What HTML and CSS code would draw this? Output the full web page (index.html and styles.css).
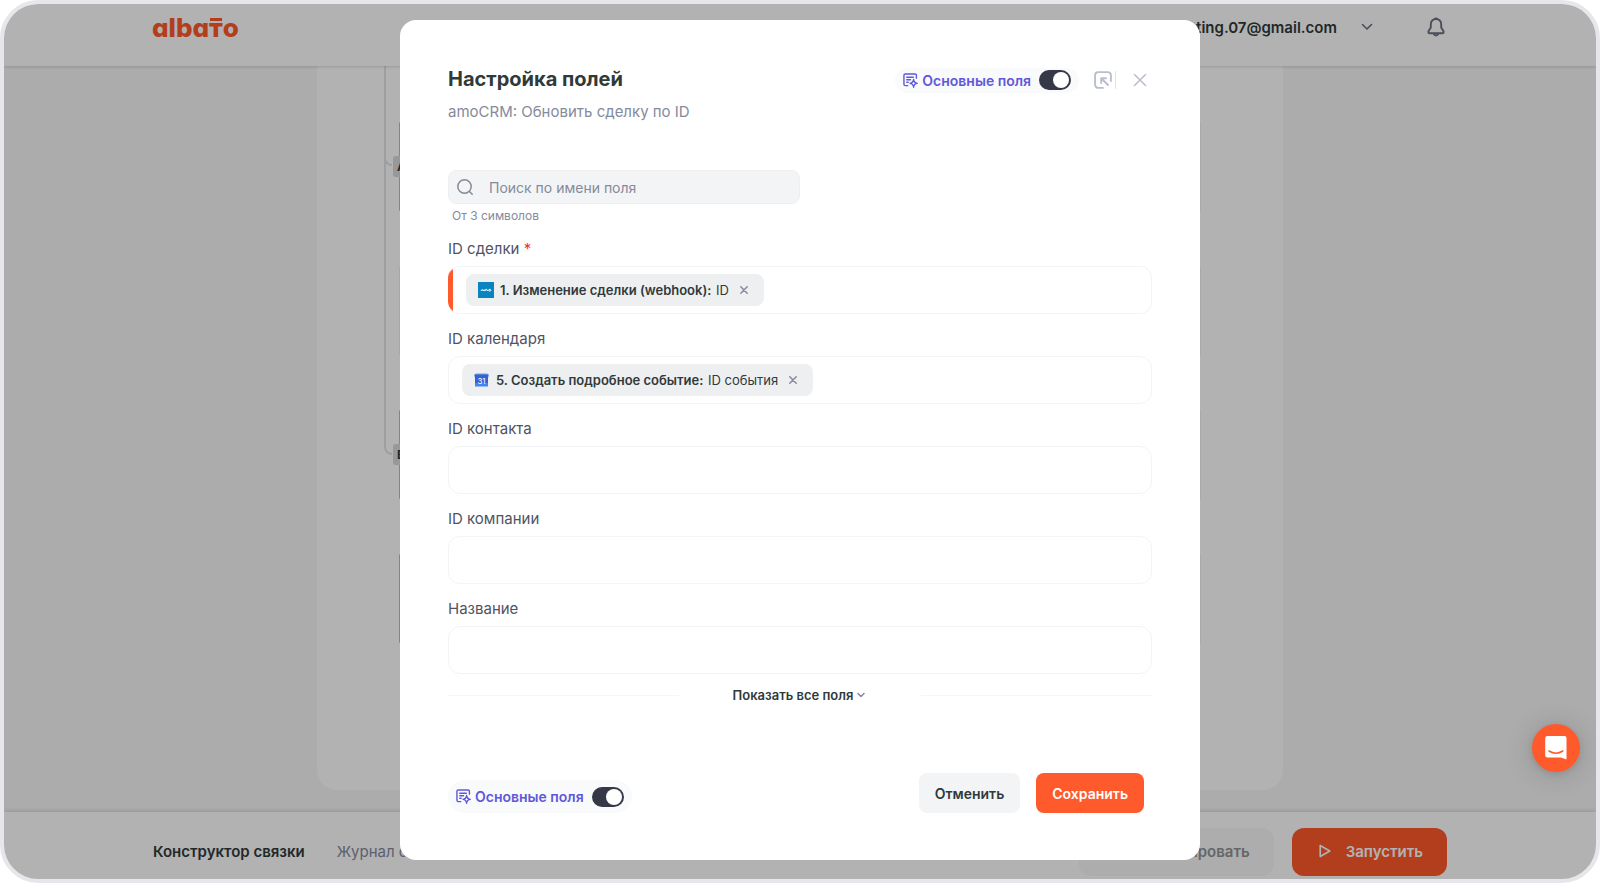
FILE: index.html
```html
<!DOCTYPE html>
<html lang="ru">
<head>
<meta charset="utf-8">
<meta name="viewport" content="width=device-width, initial-scale=1">
<title>Albato — Настройка полей</title>
<link rel="stylesheet" href="styles.css">
</head>
<body>
<svg class="sprite" aria-hidden="true">
  <symbol id="i-fields" viewBox="0 0 16 16">
    <path d="M14.300 5.500V2.500A1.500 1.500 0 0 0 12.800 1H2.500A1.500 1.500 0 0 0 1 2.500V12A1.500 1.500 0 0 0 2.500 13.500H5M4 4.500H11M4 7.200H8M4 9.900H5.500" fill="none" stroke="currentColor" stroke-width="1.500" stroke-linecap="round"/>
    <path d="M11.300 6.800C11.600 9.800 12.500 10.700 15.200 11C12.500 11.300 11.600 12.200 11.300 15.200C11 12.200 10.100 11.300 7.400 11C10.100 10.700 11 9.800 11.300 6.800Z" fill="none" stroke="currentColor" stroke-width="1.400" stroke-linejoin="round"/>
  </symbol>
  <symbol id="i-chevron" viewBox="0 0 12 12"><path d="M1.500 3.500L6 8L10.500 3.500" fill="none" stroke="currentColor" stroke-width="1.600" stroke-linecap="round" stroke-linejoin="round"/></symbol>
  <symbol id="i-chevron-small" viewBox="0 0 8 8"><path d="M1 2.500L4 5.500L7 2.500" fill="none" stroke="currentColor" stroke-width="1.500" stroke-linecap="round" stroke-linejoin="round"/></symbol>
  <symbol id="i-cross" viewBox="0 0 14 14"><path d="M1.500 1.500L12.500 12.500M12.500 1.500L1.500 12.500" fill="none" stroke="currentColor" stroke-width="1.500" stroke-linecap="round"/></symbol>
  <symbol id="i-cross-small" viewBox="0 0 8 8"><path d="M.8 .8L7.200 7.200M7.200 .8L.8 7.200" fill="none" stroke="currentColor" stroke-width="1.500" stroke-linecap="round"/></symbol>
</svg>
<div class="frame">
  <div class="page">
    <header class="topbar">
      <div class="container topbar-row">
        <a class="logo" href="#" aria-label="albato">alba<span class="logo-t">т</span>o</a>
        <div class="account">
          <button class="account-menu" type="button">marketing.07@gmail.com
            <svg class="account-chevron"><use href="#i-chevron"/></svg>
          </button>
          <button class="bell" type="button" aria-label="Уведомления">
            <svg viewBox="0 0 18 20" width="18" height="20" fill="none" stroke="currentColor" stroke-width="1.900" stroke-linecap="round" stroke-linejoin="round"><path d="M7.300 2.300Q9 .5 10.700 2.300M9 2C5.800 2 3.800 4.200 3.800 7.200V10.500L1.500 14.300Q1 16.200 2.600 16.200H15.400Q17 16.200 16.500 14.300L14.200 10.500V7.200C14.200 4.200 12.200 2 9 2ZM7 17.500Q9 19.800 11 17.500"/></svg>
          </button>
        </div>
      </div>
    </header>
    <main class="workspace">
      <div class="canvas">
        <span class="wire wire-upper"></span>
        <span class="wire wire-lower"></span>
        <span class="node node-a"></span>
        <span class="node node-b"></span>
        <span class="node node-c"></span>
        <span class="node node-d"></span>
        <span class="branch branch-a">А</span>
        <span class="branch branch-b">Б</span>
      </div>
    </main>
    <footer class="bottombar">
      <div class="container bottombar-row">
        <nav class="tabs">
          <a class="tab tab-active" href="#">Конструктор связки</a>
          <a class="tab" href="#">Журнал связки</a>
        </nav>
        <div class="run-actions">
          <button class="btn-test" type="button" disabled>Протестировать</button>
          <button class="btn-run" type="button">
            <svg viewBox="0 0 14 14" width="14" height="14"><path d="M2.200 1.500V12.500L11.800 7Z" fill="none" stroke="currentColor" stroke-width="1.600" stroke-linejoin="round"/></svg>
            Запустить
          </button>
        </div>
      </div>
    </footer>
  </div>

  <div class="overlay">
    <form class="dialog" role="dialog" aria-labelledby="dialog-title">
      <div class="dialog-head">
        <h1 class="dialog-title" id="dialog-title">Настройка полей</h1>
        <div class="head-tools">
          <label class="mode mode-compact">
            <svg class="mode-icon"><use href="#i-fields"/></svg>
            Основные поля
            <input class="switch" type="checkbox" checked>
          </label>
          <button class="tool tool-expand" type="button" aria-label="Развернуть">
            <svg viewBox="0 0 18 18" width="18" height="18" fill="none" stroke="currentColor" stroke-width="1.900" stroke-linecap="round" stroke-linejoin="round"><path d="M16.900 10V4.200A3.100 3.100 0 0 0 13.800 1.100H4.200A3.100 3.100 0 0 0 1.100 4.200V13.800A3.100 3.100 0 0 0 4.200 16.900H9M7.200 12V7.200H12M7.500 7.500L14 14"/></svg>
          </button>
          <button class="tool tool-close" type="button" aria-label="Закрыть">
            <svg width="14" height="14"><use href="#i-cross"/></svg>
          </button>
        </div>
      </div>
      <p class="dialog-subtitle">amoCRM: Обновить сделку по ID</p>

      <div class="search">
        <svg viewBox="0 0 16 16" width="16" height="16" fill="none" stroke="currentColor" stroke-width="1.500" stroke-linecap="round"><circle cx="7.500" cy="7.500" r="6.700"/><path d="M12.500 12.500L15.200 15.200"/></svg>
        <input class="search-input" type="search" placeholder="Поиск по имени поля" aria-label="Поиск по имени поля" aria-describedby="search-hint">
      </div>
      <p class="hint" id="search-hint">От 3 символов</p>

      <div class="fields">
        <div class="field">
          <label class="field-label" for="deal">ID сделки <span class="required">*</span></label>
          <div class="box box-required">
            <span class="chip">
              <svg class="chip-icon" viewBox="0 0 16 16"><rect width="16" height="16" fill="#0a84c1"/><path d="M3.200 8.900C3.200 7.200 5.200 7.200 5.200 8.900M5.400 9V7.800M6.400 9V8Q7.200 6.800 7.900 8V9M7.900 8Q8.800 6.800 9.500 8V9M11 7.400H12.300Q13.500 8.200 12.300 9H11Q10 8.200 11 7.400" fill="none" stroke="#fff" stroke-width="1"/></svg>
              <span class="chip-text"><b>1. Изменение сделки (webhook):</b> ID</span>
              <button class="chip-remove" type="button" aria-label="Удалить"><svg width="8" height="8"><use href="#i-cross-small"/></svg></button>
            </span>
            <input class="box-input" id="deal" type="text">
          </div>
        </div>
        <div class="field">
          <label class="field-label" for="calendar">ID календаря</label>
          <div class="box">
            <span class="chip">
              <svg class="chip-icon" viewBox="0 0 16 16"><path d="M1.500 1H13.500V4H1.500Z" fill="#c3c3c6"/><path d="M.5 2.500H14.500L14 6V14.500H1V6Z" fill="#4285f4"/><path d="M.5 2.500H14.500L14 6V11H1V6Z" fill="#3563d6"/><text x="7.500" y="12" text-anchor="middle" class="calendar-day">31</text></svg>
              <span class="chip-text"><b>5. Создать подробное событие:</b> ID события</span>
              <button class="chip-remove" type="button" aria-label="Удалить"><svg width="8" height="8"><use href="#i-cross-small"/></svg></button>
            </span>
            <input class="box-input" id="calendar" type="text">
          </div>
        </div>
        <div class="field">
          <label class="field-label" for="contact">ID контакта</label>
          <div class="box"><input class="box-input" id="contact" type="text"></div>
        </div>
        <div class="field">
          <label class="field-label" for="company">ID компании</label>
          <div class="box"><input class="box-input" id="company" type="text"></div>
        </div>
        <div class="field">
          <label class="field-label" for="name">Название</label>
          <div class="box"><input class="box-input" id="name" type="text"></div>
        </div>
      </div>

      <div class="more">
        <button class="more-button" type="button">Показать все поля <svg width="8" height="8"><use href="#i-chevron-small"/></svg></button>
      </div>

      <div class="dialog-foot">
        <label class="mode">
          <svg class="mode-icon"><use href="#i-fields"/></svg>
          Основные поля
          <input class="switch" type="checkbox" checked>
        </label>
        <div class="dialog-actions">
          <button class="btn btn-cancel" type="button">Отменить</button>
          <button class="btn btn-save" type="submit">Сохранить</button>
        </div>
      </div>
    </form>
    <button class="chat" type="button" aria-label="Чат поддержки">
      <svg viewBox="0 0 24 26" width="24" height="26"><path d="M3.500 1H20.500Q22.500 1 22.500 3V24.500L17 22.500H3.500Q1.200 22.500 1.200 20.200V3.300Q1.200 1 3.500 1Z" fill="#fff"/><path d="M5 16Q11.800 20.500 18.800 16" fill="none" stroke="#ff5a2c" stroke-width="1.500" stroke-linecap="round"/></svg>
    </button>
  </div>
</div>
</body>
</html>
```

FILE: styles.css
```css
* { box-sizing: border-box; }

body {
  margin: 0;
  background: #fff;
  color: #303a3a;
  font-family: Inter, "Noto Sans", sans-serif;
  font-size: 15px;
}

button, input { font: inherit; color: inherit; }
button { padding: 0; border: 0; background: none; cursor: pointer; }
a { color: inherit; text-decoration: none; }
h1, p { margin: 0; }
svg { display: block; flex: none; }
.sprite { position: absolute; width: 0; height: 0; }

.frame {
  display: grid;
  min-height: 100vh;
  border: 4px solid #e5e7eb;
  border-radius: 38px;
  overflow: hidden;
}
.page, .overlay { grid-area: 1 / 1; min-width: 0; }

/* Page under the dialog */
.page {
  display: flex;
  flex-direction: column;
  background: #f6f6f6;
}
.container {
  width: 100%;
  max-width: 1296px;
  margin: 0 auto;
}
.topbar {
  z-index: 1;
  padding-bottom: 16px;
  background: #fff;
  box-shadow: 0 1px 3px #00000024;
}
.topbar-row, .bottombar-row {
  display: flex;
  align-items: center;
  justify-content: space-between;
}
.topbar-row { height: 46px; }
.bottombar-row { height: 48px; }
.logo {
  padding-top: 2px;
  color: #ff5a2c;
  font-size: 26px;
  font-weight: 800;
  line-height: 32px;
  font-feature-settings: "cv11";
}
.logo-t { position: relative; }
.logo-t::before {
  content: "";
  position: absolute;
  top: 6px;
  left: 1px;
  right: 1px;
  height: 3px;
  background: currentColor;
}
.account {
  display: flex;
  align-items: center;
  gap: 54px;
  padding-right: 3px;
}
.account-menu {
  display: flex;
  align-items: center;
  gap: 24px;
  font-weight: 600;
}
.account-chevron { width: 12px; height: 12px; color: #6b7080; }
.bell { color: #6b7080; }

.workspace {
  display: flex;
  flex: 1;
  justify-content: center;
  padding-bottom: 22px;
}
.canvas {
  position: relative;
  width: 966px;
  background: #fff;
  border-radius: 0 0 20px 20px;
}
.wire {
  position: absolute;
  left: 67px;
  width: 8px;
  border-left: 2px solid #e3e4e6;
  border-bottom: 2px solid #e3e4e6;
  border-radius: 0 0 0 8px;
}
.wire-upper { top: 0; height: 100px; }
.wire-lower { top: 0; height: 389px; }
.node {
  position: absolute;
  left: 82px;
  right: 82px;
  border: 1px solid #f2f2f2;
  border-left-color: #7fe0bf;
}
.node-a { top: 56px; height: 89px; }
.node-b { top: 201px; height: 88px; border-left-color: #eee; }
.node-c { top: 344px; height: 89px; }
.node-d { top: 488px; height: 89px; }
.branch {
  position: absolute;
  left: 76px;
  padding: 0 4px;
  border-radius: 3px;
  background: #d9dadd;
  font-size: 12px;
  font-weight: 700;
  line-height: 21px;
}
.branch-a { top: 90px; }
.branch-b { top: 378px; }

.bottombar {
  padding: 16px 0 3px;
  background: #fff;
  box-shadow: 0 -1px 4px #00000024;
}
.tabs {
  display: flex;
  gap: 32px;
  padding: 0 0 2px 1px;
}
.tab { color: #858a9c; }
.tab-active { color: #303a3a; font-weight: 600; }
.run-actions {
  display: flex;
  gap: 18px;
  padding-right: 1px;
}
.btn-test, .btn-run {
  display: flex;
  align-items: center;
  height: 48px;
  border-radius: 12px;
  font-weight: 600;
}
.btn-test {
  justify-content: flex-end;
  width: 195px;
  padding: 0 24px 2px 0;
  background: #f8f8f9;
  color: #8f9494;
}
.btn-run {
  gap: 14px;
  padding: 0 24px 2px 26px;
  background: #ff5a2c;
  color: #fff;
}

/* Dialog */
.overlay {
  position: relative;
  z-index: 2;
  display: flex;
  justify-content: center;
  align-items: flex-start;
  padding: 16px 0 19px;
  background: rgba(0, 0, 0, 0.3);
}
.dialog {
  width: 100%;
  max-width: 800px;
  padding: 44px 48px 47px;
  border-radius: 16px;
  background: #fff;
}
.dialog-head {
  display: flex;
  align-items: center;
  justify-content: space-between;
}
.dialog-title {
  font-size: 20px;
  font-weight: 700;
  line-height: 30px;
}
.dialog-subtitle {
  margin-top: 6px;
  color: #858a9c;
  line-height: 24px;
}
.head-tools {
  display: flex;
  align-items: center;
  padding-top: 2px;
  color: #b9becb;
}
.mode {
  display: flex;
  align-items: center;
  gap: 4px;
  height: 33px;
  padding: 0 8px;
  border-radius: 17px;
  background: #f9fafc;
  color: #5f58db;
  font-size: 14px;
  font-weight: 600;
}
.mode-compact { height: 25px; }
.mode-icon { width: 15px; height: 15px; }
.switch {
  appearance: none;
  display: flex;
  width: 32px;
  height: 20px;
  margin: 0 0 0 4px;
  padding: 2px;
  border-radius: 10px;
  background: #353846;
}
.switch::before {
  content: "";
  width: 16px;
  height: 16px;
  border-radius: 50%;
  background: #fff;
}
.switch:checked { justify-content: flex-end; }
.tool-expand {
  margin-left: 15px;
  padding-right: 3px;
  border-right: 1px solid #e3e5ea;
}
.tool-close { margin: 0 5px 0 17px; }

.search {
  display: flex;
  align-items: center;
  gap: 16px;
  width: 50%;
  height: 34px;
  margin-top: 46px;
  padding: 0 8px;
  border: 1px solid #eeeff1;
  border-radius: 8px;
  background: #f3f4f6;
  color: #858a9c;
  font-size: 14px;
}
.search-input {
  flex: 1;
  min-width: 0;
  padding: 0;
  border: 0;
  outline: 0;
  background: none;
}
.search-input::placeholder { color: #858a9c; opacity: 1; }
.hint {
  margin-top: 4px;
  padding-left: 4px;
  color: #858a9c;
  font-size: 12px;
  line-height: 16px;
}

.fields {
  display: grid;
  gap: 15px;
  margin-top: 15px;
}
.field { display: grid; gap: 7px; }
.field-label { color: #4f5364; line-height: 20px; }
.required { color: #ff2b2b; }
.box {
  display: flex;
  align-items: center;
  height: 48px;
  padding: 0 13px;
  border: 1px solid #f3f4f5;
  border-radius: 12px;
}
.box-required {
  padding-left: 18px;
  border-left: 0;
  background: linear-gradient(to right, #ff5a2c 5px, #fff 5px);
}
.box-input {
  flex: 1;
  min-width: 0;
  padding: 0;
  border: 0;
  outline: 0;
  background: none;
}
.chip {
  display: flex;
  align-items: center;
  height: 32px;
  padding: 0 16px 0 12px;
  border-radius: 8px;
  background: #eeeff1;
  font-size: 13px;
}
.chip-icon { width: 16px; height: 16px; margin-right: 6px; }
.chip-text b { margin-right: 1px; font-weight: 600; }
.chip-remove { margin-left: 11px; color: #858a9c; }
.calendar-day { fill: #fff; font-size: 8px; }

.more {
  display: grid;
  grid-template-columns: 1fr auto 1fr;
  align-items: center;
  margin-top: 12px;
}
.more::before, .more::after {
  content: "";
  height: 1px;
  background: #f5f6f7;
}
.more-button {
  display: flex;
  align-items: center;
  gap: 4px;
  margin: 0 56px 0 54px;
  font-size: 13px;
  font-weight: 600;
  line-height: 18px;
}
.more-button svg { color: #858a9c; }

.dialog-foot {
  display: flex;
  align-items: flex-end;
  justify-content: space-between;
  margin-top: 69px;
  padding-right: 8px;
}
.dialog-actions { display: flex; gap: 16px; }
.btn {
  height: 40px;
  padding: 0 16px;
  border-radius: 8px;
  font-size: 14px;
  font-weight: 600;
}
.btn-cancel { background: #f3f4f6; }
.btn-save { background: #ff5a2c; color: #fff; }

.chat {
  position: absolute;
  right: 16px;
  bottom: 107px;
  display: grid;
  place-items: center;
  width: 48px;
  height: 48px;
  border-radius: 50%;
  background: #ff5a2c;
  box-shadow: 0 2px 6px #0000001a, 0 2px 28px #00000029;
}
```
